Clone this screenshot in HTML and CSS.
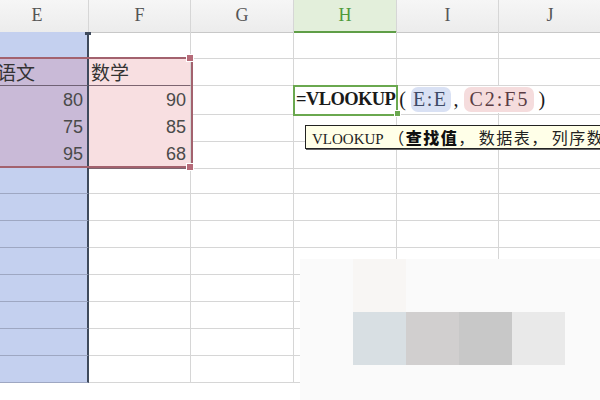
FILE: index.html
```html
<!DOCTYPE html>
<html>
<head>
<meta charset="utf-8">
<link rel="stylesheet" href="styles.css">
</head>
<body>
<div class="page">
  <div class="sheet">
    <div class="row head">
      <div class="hc">E</div><div class="hc">F</div><div class="hc">G</div><div class="hc active">H</div><div class="hc">I</div><div class="hc">J</div>
    </div>
    <div class="row">
      <div class="c e"></div><div class="c"></div><div class="c"></div><div class="c"></div><div class="c"></div><div class="c"></div>
    </div>
    <div class="row">
      <div class="c e ein txt first">语文</div><div class="c fin txt">数学</div><div class="c"></div><div class="c"></div><div class="c"></div><div class="c"></div>
    </div>
    <div class="row">
      <div class="c e ein num">80</div><div class="c fin num">90</div><div class="c"></div>
      <div class="c cur"><span class="formula"><b>=VLOOKUP</b><span class="paren">(</span><span class="caret"></span><span class="ref-e">E:E</span><span class="comma">,</span><span class="ref-c">C2:F5</span><span class="paren">)</span></span></div>
      <div class="c noright"></div><div class="c noright"></div>
    </div>
    <div class="row">
      <div class="c e ein num">75</div><div class="c fin num">85</div><div class="c"></div><div class="c"></div><div class="c"></div><div class="c"></div>
    </div>
    <div class="row">
      <div class="c e ein num">95</div><div class="c fin num">68</div><div class="c"></div><div class="c"></div><div class="c"></div><div class="c"></div>
    </div>
    <div class="row"><div class="c e"></div><div class="c"></div><div class="c"></div><div class="c"></div><div class="c"></div><div class="c"></div></div>
    <div class="row"><div class="c e"></div><div class="c"></div><div class="c"></div><div class="c"></div><div class="c"></div><div class="c"></div></div>
    <div class="row"><div class="c e"></div><div class="c"></div><div class="c"></div><div class="c"></div><div class="c"></div><div class="c"></div></div>
    <div class="row"><div class="c e"></div><div class="c"></div><div class="c"></div><div class="c"></div><div class="c"></div><div class="c"></div></div>
    <div class="row"><div class="c e"></div><div class="c"></div><div class="c"></div><div class="c"></div><div class="c"></div><div class="c"></div></div>
    <div class="row"><div class="c e"></div><div class="c"></div><div class="c"></div><div class="c"></div><div class="c"></div><div class="c"></div></div>
    <div class="row"><div class="c e"></div><div class="c"></div><div class="c"></div><div class="c"></div><div class="c"></div><div class="c"></div></div>
    <div class="row"><div class="c e"></div><div class="c"></div><div class="c"></div><div class="c"></div><div class="c"></div><div class="c"></div></div>
  </div>

  <div class="range"></div>
  <div class="handle h-top"></div>
  <div class="handle h-bot"></div>
  <div class="etick"></div>
  <div class="fill-handle"></div>

  <div class="tooltip"><span class="mono">VLOOKUP</span> <span class="cjk">（<b>查找值</b>，<span class="gap"></span>数据表，<span class="gap"></span>列序数，<span class="gap"></span>匹配条件）</span></div>

  <div class="mosaic">
    <div></div><div class="m1"></div><div></div><div></div><div></div><div></div>
    <div></div><div class="m2"></div><div class="m3"></div><div class="m4"></div><div class="m5"></div><div></div>
    <div></div><div></div><div></div><div></div><div></div><div></div>
  </div>
</div>
</body>
</html>
```
FILE: styles.css
```css
html, body {
  margin: 0;
  padding: 0;
  background: #ffffff;
  overflow: hidden;
}
.page {
  position: relative;
  width: 600px;
  height: 400px;
  overflow: hidden;
}
.sheet {
  margin-left: -14px;
  width: 616px;
}
.row {
  display: grid;
  grid-template-columns: 103px 102px 103px 103px 102px 103px;
  height: 27px;
}
.row.head {
  height: 32px;
  background: linear-gradient(#f6f6f6, #ececec);
}
.hc {
  box-sizing: border-box;
  border-right: 1px solid #d6d6d6;
  border-bottom: 1px solid #c8c8c8;
  text-align: center;
  font-family: "Liberation Serif", serif;
  font-size: 18px;
  line-height: 31px;
  color: #555;
}
.hc.active {
  background: #e3efdb;
  color: #4f9a3c;
  border-bottom: 2px solid #5f9e47;
}
.c {
  box-sizing: border-box;
  border-right: 1px solid #d6d6d6;
  border-bottom: 1px solid #d6d6d6;
  white-space: nowrap;
  position: relative;
}
.c.e {
  background: #c4d0ef;
  border-bottom-color: #9ea7c2;
  border-right: 2px solid #3f4a5c;
}
.c.ein {
  background: #c9bad7;
  border-bottom-color: #6f6275;
}
.c.fin {
  background: #f8dfe1;
  border-bottom-color: #7d6570;
}
.c.noright {
  border-right-color: transparent;
}
.txt {
  font-family: "Noto Sans CJK SC", sans-serif;
  font-size: 19px;
  line-height: 26px;
  color: #333;
  padding-left: 2px;
}
.txt.first {
  padding-left: 11px;
}
.num {
  font-family: "Liberation Sans", sans-serif;
  font-size: 18px;
  line-height: 28px;
  color: #4a4a4a;
  text-align: right;
  padding-right: 4px;
}
.cur {
  outline: 2px solid #6aa84f;
  outline-offset: -1px;
  z-index: 2;
  border-right-color: transparent;
}
.formula {
  display: flex;
  align-items: center;
  height: 26px;
  padding-left: 2px;
  font-family: "Liberation Serif", serif;
  font-size: 20px;
  color: #1a1a1a;
}
.formula b {
  font-weight: bold;
  font-size: 18.5px;
  letter-spacing: -0.6px;
}
.paren {
  margin: 0 2px 0 4px;
}
.caret {
  display: inline-block;
  width: 1px;
  height: 20px;
  background: #222;
  margin: 0 1px 0 2px;
}
.ref-e {
  background: #d9e1f4;
  border-radius: 7px;
  padding: 1px 4px 1px 2px;
  color: #3e4a66;
  letter-spacing: 1.5px;
}
.ref-c {
  background: #f5dcdd;
  border-radius: 7px;
  padding: 1px 5px;
  color: #5a3c44;
  letter-spacing: 2px;
}
.comma {
  margin: 0 6px 0 2px;
}
.range {
  position: absolute;
  left: -10px;
  top: 57px;
  width: 199px;
  height: 107px;
  border: 2px solid #a3626e;
}
.handle {
  position: absolute;
  width: 6px;
  height: 6px;
  background: #b56a78;
  border: 1px solid #ffffff;
}
.h-top { left: 186px; top: 54px; }
.h-bot { left: 186px; top: 163px; }
.etick {
  position: absolute;
  left: 85px;
  top: 32px;
  width: 6px;
  height: 3px;
  background: #3f4a5c;
}
.fill-handle {
  position: absolute;
  left: 394px;
  top: 110px;
  width: 5px;
  height: 5px;
  background: #6aa84f;
  border: 1px solid #fff;
  z-index: 3;
}
.tooltip {
  position: absolute;
  left: 305px;
  top: 125px;
  width: 320px;
  height: 24px;
  box-sizing: border-box;
  background: #ffffe8;
  border: 1px solid #222;
  box-shadow: 1px 1px 0 #666;
  padding-left: 6px;
  font-family: "Noto Sans CJK SC", sans-serif;
  font-size: 16px;
  line-height: 22px;
  color: #222;
  white-space: nowrap;
}
.tooltip .mono {
  font-family: "Liberation Serif", serif;
  font-size: 15px;
}
.tooltip .cjk {
  margin-left: 1px;
  letter-spacing: 1.5px;
}
.tooltip .gap {
  display: inline-block;
  width: 3px;
}
.tooltip b {
  font-weight: 900;
  color: #111;
}
.mosaic {
  position: absolute;
  left: 300px;
  top: 259px;
  width: 300px;
  height: 141px;
  background: #fafafa;
  display: grid;
  grid-template-columns: 53px 53px 53px 53px 53px 35px;
  grid-template-rows: 53px 53px 35px;
  z-index: 5;
}
.mosaic .m1 { background: #f8f6f4; }
.mosaic .m2 { background: #d8dfe3; }
.mosaic .m3 { background: #d1cfcf; }
.mosaic .m4 { background: #c8c8c8; }
.mosaic .m5 { background: #e9e9e9; }
```
